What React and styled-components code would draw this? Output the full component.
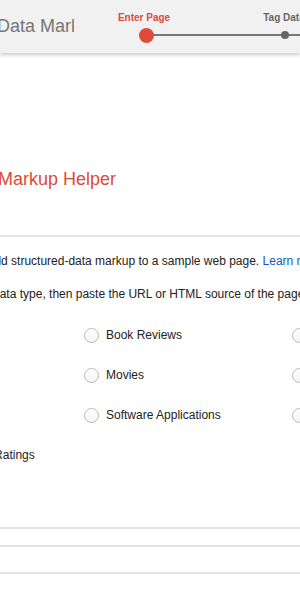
import React from 'react';
import styled, { createGlobalStyle } from 'styled-components';

const steps = [
  { label: 'Enter Page', active: true },
  { label: 'Tag Data', active: false },
  { label: 'Create HTML', active: false },
];

const dataTypes = [
  'Articles',
  'Book Reviews',
  'Events',
  'Local Businesses',
  'Movies',
  'Products',
  'Restaurants',
  'Software Applications',
  'TV Episodes',
  'Media Reviews & Ratings',
];

const App = () => {
  return (
    <>
      <GlobalStyle />
      <Page>
        <Header>
          <TitleClip>
            <Title>Structured Data Markup Helper</Title>
          </TitleClip>
          <Stepper>
            {steps.map((step, i) => (
              <Step key={step.label}>
                <StepLabel $active={step.active}>{step.label}</StepLabel>
                <DotRow $first={i === 0}>
                  <Dot $active={step.active} />
                </DotRow>
              </Step>
            ))}
          </Stepper>
        </Header>

        <main>
          <Heading>Structured Data Markup Helper</Heading>
          <Divider $top={44} />

          <Para $top={16} $shift={95}>
            Use this tool to add structured-data markup to a sample web page.{' '}
            <Link href="#">Learn more</Link>
          </Para>
          <Para $top={17} $shift={43}>
            Pick a data type, then paste the URL or HTML source of the page you want to mark up.
          </Para>

          <TypeGrid>
            {dataTypes.map((type) => (
              <Option key={type}>
                <Radio />
                {type}
              </Option>
            ))}
          </TypeGrid>

          <Divider $top={52} />
          <Divider $top={16} />
          <Divider $top={25} />
        </main>
      </Page>
    </>
  );
};

const GlobalStyle = createGlobalStyle`
  html, body {
    margin: 0;
    background: #fff;
  }
  body {
    overflow: hidden;
    font-family: "Liberation Sans", Arial, sans-serif;
  }
`;

const Page = styled.div`
  width: 300px;
  height: 600px;
  overflow: hidden;
`;

// Header bar
const Header = styled.header`
  position: relative;
  z-index: 1;
  display: flex;
  align-items: flex-start;
  height: 53px;
  padding-top: 12px;
  box-sizing: border-box;
  background: #f1f1f1;
  box-shadow: 0 2px 4px rgba(0, 0, 0, 0.2);
`;

const TitleClip = styled.div`
  width: 74px;
  flex-shrink: 0;
  margin-top: 2px;
  overflow: hidden;
`;

const Title = styled.h1`
  margin: 0 0 0 -91px;
  font-size: 18px;
  line-height: 24px;
  font-weight: normal;
  color: #767676;
  white-space: nowrap;
`;

const Stepper = styled.div`
  display: flex;
  flex-shrink: 0;
`;

const Step = styled.div`
  width: 140px;
  display: flex;
  flex-direction: column;
  align-items: center;
`;

const StepLabel = styled.div`
  font-size: 10px;
  line-height: 12px;
  font-weight: bold;
  white-space: nowrap;
  color: ${(p) => (p.$active ? '#dd4b39' : '#666')};
`;

const DotRow = styled.div`
  position: relative;
  align-self: stretch;
  height: 16px;
  margin-top: 3px;
  display: flex;
  align-items: center;
  justify-content: center;

  &::before {
    content: '';
    position: absolute;
    top: 7px;
    left: ${(p) => (p.$first ? '50%' : '0')};
    right: 0;
    height: 2px;
    background: #777;
  }
`;

const Dot = styled.span`
  position: relative;
  z-index: 1;
  width: ${(p) => (p.$active ? '15px' : '8px')};
  height: ${(p) => (p.$active ? '15px' : '8px')};
  margin-left: ${(p) => (p.$active ? '5px' : '2px')};
  border-radius: 50%;
  background: ${(p) => (p.$active ? '#dd4b39' : '#666')};
`;

// Body
const Heading = styled.h2`
  margin: 114px 0 0 -133px;
  font-size: 18px;
  line-height: 24px;
  font-weight: normal;
  color: #dd4b39;
  white-space: nowrap;
`;

const Divider = styled.hr`
  height: 2px;
  margin: ${(p) => p.$top}px 0 0;
  border: 0;
  background: #e3e3e3;
`;

const Para = styled.p`
  margin: ${(p) => p.$top}px 0 0 ${(p) => -p.$shift}px;
  font-size: 12px;
  line-height: 16px;
  color: #222;
  white-space: nowrap;
`;

const Link = styled.a`
  color: #15c;
  text-decoration: none;
`;

const TypeGrid = styled.div`
  display: grid;
  grid-template-columns: repeat(3, 208px);
  grid-auto-rows: 40px;
  margin: 13px 0 0 -124px;
`;

const Option = styled.label`
  display: flex;
  align-items: center;
  gap: 7px;
  font-size: 12px;
  line-height: 16px;
  color: #222;
  white-space: nowrap;
`;

const Radio = styled.span`
  flex-shrink: 0;
  width: 15px;
  height: 15px;
  box-sizing: border-box;
  border: 1px solid #b9b9b9;
  border-radius: 50%;
  background: linear-gradient(#fff, #f4f4f4);
`;

export default App;
